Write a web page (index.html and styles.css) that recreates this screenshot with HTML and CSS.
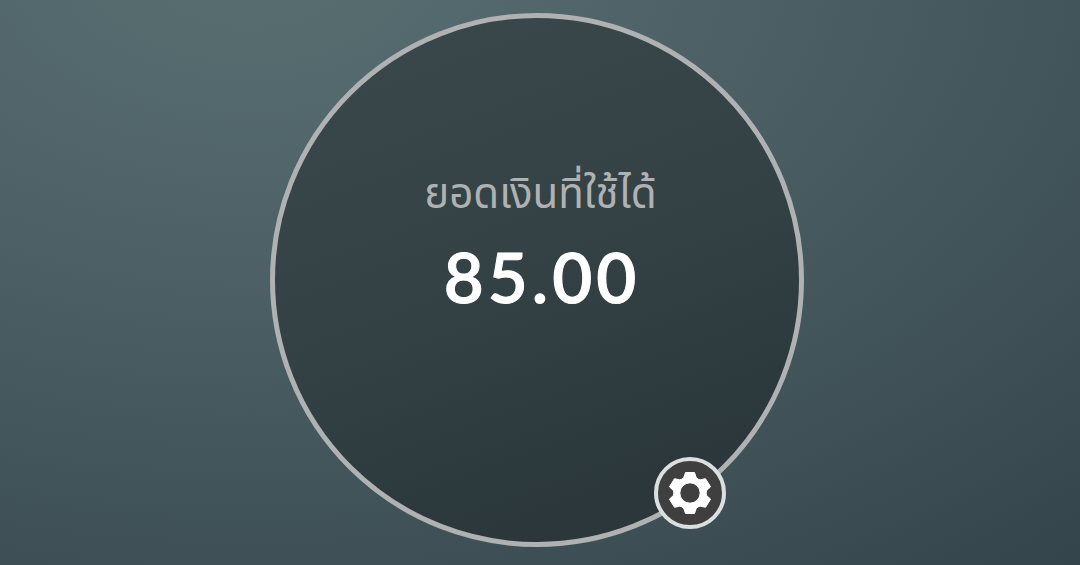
FILE: index.html
```html
<!DOCTYPE html>
<html lang="th">
    <head>
        <meta charset="UTF-8">
        <title>ยอดเงินที่ใช้ได้</title>
        <link rel="stylesheet" href="styles.css">
    </head>
    <body>
        <div class="conteudo">
            <div class="circle">
                <div class="label">ยอดเงินที่ใช้ได้</div>
                <div class="amount">85.00</div>
                <button class="settings" type="button" aria-label="ตั้งค่า">
                    <svg class="gear" viewBox="-22 -22 44 44">
                        <path fill-rule="evenodd" d="M-6.2 -15.5L-4.5 -20.5H4.5L6.2 -15.5Q7.8 -13.3 10.4 -13.2L15.5 -14.3L20.6 -6.2L16.7 -2.6Q15.6 0 16.7 2.6L20.6 6.2L15.5 14.3L10.4 13.2Q7.8 13.3 6.2 15.5L4.5 20.5H-4.5L-6.2 15.5Q-7.8 13.3 -10.4 13.2L-15.5 14.3L-20.6 6.2L-16.7 2.6Q-15.6 0 -16.7 -2.6L-20.6 -6.2L-15.5 -14.3L-10.4 -13.2Q-7.8 -13.3 -6.2 -15.5ZM10.2 0A10.2 10.2 0 1 0 -10.2 0A10.2 10.2 0 1 0 10.2 0Z"/>
                    </svg>
                </button>
            </div>
        </div>
    </body>
</html>
```
FILE: styles.css
```css
body{
    margin: 0;
    height: 565px;
    overflow: hidden;
    background: radial-gradient(1280px 800px at 250px -40px, #596e70 0, #54696d 17%, #4b5f64 41%, #43565b 62%, #3f5157 74%, #33444b 100%);
    font-family: "Noto Sans Thai", "Noto Sans", "Open Sans", sans-serif;
}
.conteudo{
    display: flex;
    justify-content: center;
    padding: 13px 6px 0 0;
}
.circle{
    box-sizing: border-box;
    position: relative;
    display: flex;
    flex-direction: column;
    align-items: center;
    width: 534px;
    height: 534px;
    padding: 144px 0 0 7px;
    border: 5px solid #afb1b2;
    border-radius: 50%;
    background: linear-gradient(160deg, #3a484b 5%, #344246 45%, #2b373a 85%);
}
.label{
    height: 77px;
    line-height: 66px;
    font-size: 42px;
    font-weight: 400;
    color: #afb1b2;
    white-space: nowrap;
}
.amount{
    padding-left: 3px;
    line-height: 76px;
    font-family: Lato, "Noto Sans", sans-serif;
    font-size: 69px;
    font-weight: 600;
    letter-spacing: 4px;
    color: #fff;
    -webkit-text-stroke: 1px #fff;
}
/* sits on the edge of the circle */
.settings{
    box-sizing: border-box;
    position: absolute;
    right: 73px;
    bottom: 13px;
    display: flex;
    align-items: center;
    justify-content: center;
    width: 72px;
    height: 72px;
    padding: 0;
    border: 4px solid #dcdfe0;
    border-radius: 50%;
    background: #403f3f;
    cursor: pointer;
}
.gear{
    width: 44px;
    height: 44px;
    flex: none;
    fill: #fff;
    stroke: #fff;
    stroke-linejoin: round;
}
```
